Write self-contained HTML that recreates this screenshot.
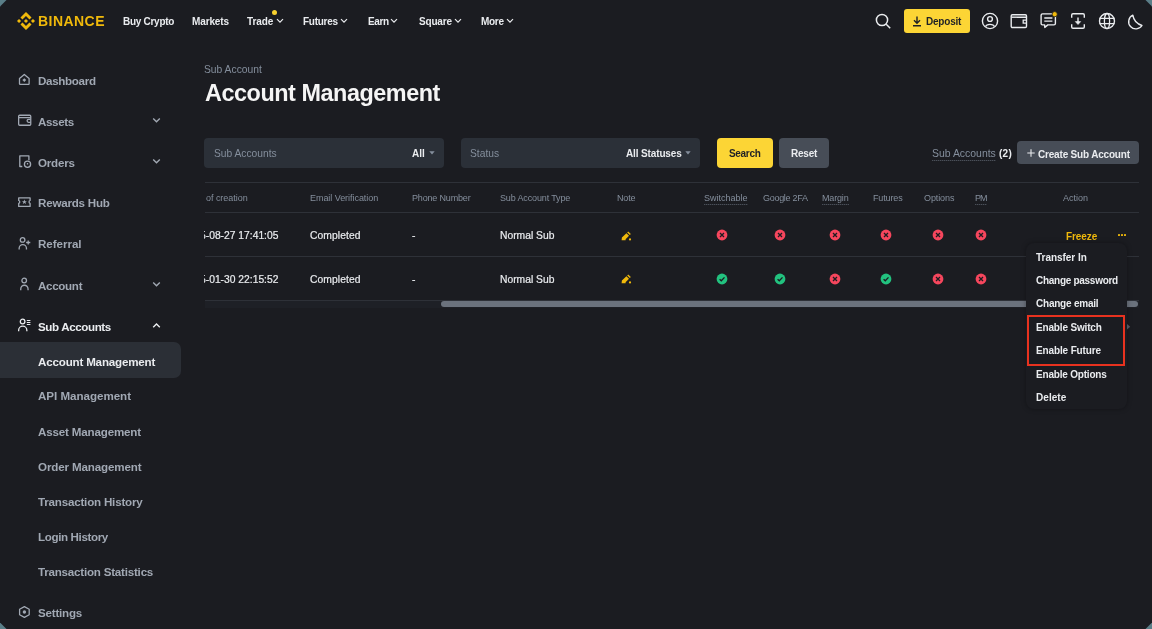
<!DOCTYPE html>
<html><head><meta charset="utf-8"><style>
html,body{margin:0;padding:0;}
body{width:1152px;height:629px;overflow:hidden;background:#5a7e88;position:relative;font-family:"Liberation Sans",sans-serif;}
#win{position:absolute;left:0;top:0;width:1152px;height:629px;background:#1b1c21;clip-path:polygon(6.5px 0,1145.5px 0,1152px 6.5px,1152px 622.5px,1145.5px 629px,6.5px 629px,0 622.5px,0 6.5px);}
.t{position:absolute;white-space:nowrap;line-height:1;will-change:transform;}
.r{position:absolute;}
</style></head><body><div id="win">
<svg class="r" style="left:17px;top:12px;" width="18" height="18" viewBox="0 0 126.61 126.61"><g fill="#f0b90b"><path d="M38.73,53.2,63.3,28.63,87.89,53.22l14.3-14.3L63.3,0,24.43,38.87Z"/><path d="M0,63.31l14.3-14.3,14.3,14.3L14.3,77.61Z"/><path d="M38.73,73.41,63.3,98l24.59-24.6,14.31,14.29L63.3,126.61,24.42,87.74Z"/><path d="M98,63.31l14.3-14.3,14.3,14.3-14.3,14.3Z"/><path d="M77.81,63.3,63.3,48.78,48.8,63.29,63.3,77.83Z"/></g></svg>
<div class="t" style="left:38.00px;top:14.00px;font-size:14.0px;font-weight:700;color:#f0b90b;letter-spacing:0.45px;">BINANCE</div>
<div class="t" style="left:122.50px;top:17.00px;font-size:10.0px;font-weight:700;color:#eaecef;letter-spacing:-0.278px;">Buy Crypto</div>
<div class="t" style="left:191.90px;top:17.00px;font-size:10.0px;font-weight:700;color:#eaecef;letter-spacing:-0.119px;">Markets</div>
<div class="t" style="left:246.90px;top:17.00px;font-size:10.0px;font-weight:700;color:#eaecef;letter-spacing:-0.072px;">Trade</div>
<div class="t" style="left:302.80px;top:17.00px;font-size:10.0px;font-weight:700;color:#eaecef;letter-spacing:-0.262px;">Futures</div>
<div class="t" style="left:367.80px;top:17.00px;font-size:10.0px;font-weight:700;color:#eaecef;letter-spacing:-0.378px;">Earn</div>
<div class="t" style="left:418.75px;top:17.00px;font-size:10.0px;font-weight:700;color:#eaecef;letter-spacing:-0.181px;">Square</div>
<div class="t" style="left:481.25px;top:17.00px;font-size:10.0px;font-weight:700;color:#eaecef;letter-spacing:-0.302px;">More</div>
<svg class="r" style="left:275.5px;top:18px;" width="8" height="6" viewBox="0 0 8 6"><path d="M1 1.2 L4 4.2 L7 1.2" fill="none" stroke="#eaecef" stroke-width="1.2"/></svg>
<svg class="r" style="left:340px;top:18px;" width="8" height="6" viewBox="0 0 8 6"><path d="M1 1.2 L4 4.2 L7 1.2" fill="none" stroke="#eaecef" stroke-width="1.2"/></svg>
<svg class="r" style="left:390px;top:18px;" width="8" height="6" viewBox="0 0 8 6"><path d="M1 1.2 L4 4.2 L7 1.2" fill="none" stroke="#eaecef" stroke-width="1.2"/></svg>
<svg class="r" style="left:454px;top:18px;" width="8" height="6" viewBox="0 0 8 6"><path d="M1 1.2 L4 4.2 L7 1.2" fill="none" stroke="#eaecef" stroke-width="1.2"/></svg>
<svg class="r" style="left:506px;top:18px;" width="8" height="6" viewBox="0 0 8 6"><path d="M1 1.2 L4 4.2 L7 1.2" fill="none" stroke="#eaecef" stroke-width="1.2"/></svg>
<div class="r" style="left:272.3px;top:10.3px;width:5px;height:5px;border-radius:50%;background:#f8d12f"></div>
<svg class="r" style="left:875px;top:13px;" width="17" height="17" viewBox="0 0 17 17"><circle cx="7" cy="7" r="5.6" fill="none" stroke="#eaecef" stroke-width="1.5"/><path d="M11.2 11.2 L15.2 15.2" stroke="#eaecef" stroke-width="1.5"/></svg>
<div class="r" style="left:904px;top:9px;width:65.5px;height:24px;background:#fcd535;border-radius:3px;"></div>
<svg class="r" style="left:912px;top:15.5px;" width="10" height="11" viewBox="0 0 10 11"><path d="M5 0.5 V7 M2 4.2 L5 7.2 L8 4.2 M1 9.8 H9" fill="none" stroke="#1e2026" stroke-width="1.4"/></svg>
<div class="t" style="left:926.40px;top:17.00px;font-size:10.0px;font-weight:700;color:#1e2026;letter-spacing:-0.212px;">Deposit</div>
<svg class="r" style="left:981px;top:12px;" width="18" height="18" viewBox="0 0 18 18"><circle cx="9" cy="9" r="7.6" fill="none" stroke="#eaecef" stroke-width="1.4"/><circle cx="9" cy="7" r="2.4" fill="none" stroke="#eaecef" stroke-width="1.4"/><path d="M4.6 14.6 C5.5 11.6 12.5 11.6 13.4 14.6" fill="none" stroke="#eaecef" stroke-width="1.4"/></svg>
<svg class="r" style="left:1010px;top:13px;" width="18" height="16" viewBox="0 0 18 16"><rect x="1.2" y="1.7" width="15.3" height="12.8" rx="1.2" fill="none" stroke="#eaecef" stroke-width="1.4"/><path d="M1.2 4.2 H16.5" stroke="#eaecef" stroke-width="1.4"/><path d="M16.5 7.2 H13.2 V10.2 H16.5" fill="none" stroke="#eaecef" stroke-width="1.3"/></svg>
<svg class="r" style="left:1039px;top:11px;" width="19" height="18" viewBox="0 0 19 18"><path d="M3.5 2.9 H15 Q16.4 2.9 16.4 4.3 V12.5 Q16.4 13.9 15 13.9 H8.8 L5.8 16.4 L5.6 13.9 H3.5 Q2.1 13.9 2.1 12.5 V4.3 Q2.1 2.9 3.5 2.9 Z" fill="none" stroke="#eaecef" stroke-width="1.4" stroke-linejoin="round"/><path d="M5.3 7 H13.4 M5.3 10.1 H13.4" stroke="#eaecef" stroke-width="1.4"/><circle cx="15.7" cy="3.2" r="2.6" fill="#f0b90b" stroke="#1b1c21" stroke-width="0.8"/></svg>
<svg class="r" style="left:1070px;top:12px;" width="16" height="18" viewBox="0 0 16 18"><path d="M1.7 5.8 V3.1 Q1.7 1.8 3 1.8 H13 Q14.3 1.8 14.3 3.1 V5.8 M1.7 12.3 V15 Q1.7 16.3 3 16.3 H13 Q14.3 16.3 14.3 15 V12.3" fill="none" stroke="#eaecef" stroke-width="1.4"/><path d="M8 5.4 V10.5" stroke="#eaecef" stroke-width="1.4"/><path d="M5.3 9.6 H10.7 L8 12.5 Z" fill="#eaecef" stroke="#eaecef" stroke-width="0.6" stroke-linejoin="round"/></svg>
<svg class="r" style="left:1098px;top:11.7px;" width="18" height="18" viewBox="0 0 18 18"><circle cx="9" cy="9" r="7.5" fill="none" stroke="#eaecef" stroke-width="1.4"/><ellipse cx="9" cy="9" rx="2.6" ry="7.5" fill="none" stroke="#eaecef" stroke-width="1.3"/><path d="M1.5 6.3 H16.5 M1.5 11.7 H16.5" stroke="#eaecef" stroke-width="1.3"/></svg>
<svg class="r" style="left:1127px;top:12.5px;" width="18" height="19" viewBox="0 0 18 19"><path d="M5.8 2.2 A7.2 7.2 0 1 0 15 12.5 A13 13 0 0 1 5.8 2.2 Z" fill="none" stroke="#eaecef" stroke-width="1.4" stroke-linejoin="round"/></svg>
<div class="t" style="left:37.80px;top:75.00px;font-size:11.6px;font-weight:700;color:#a1a8b3;letter-spacing:-0.320px;">Dashboard</div>
<div class="t" style="left:37.80px;top:116.00px;font-size:11.6px;font-weight:700;color:#a1a8b3;letter-spacing:-0.366px;">Assets</div>
<svg class="r" style="left:152px;top:117.1px;" width="9" height="7" viewBox="0 0 9 7"><path d="M1.2 1.5 L4.5 4.8 L7.8 1.5" fill="none" stroke="#a1a8b3" stroke-width="1.4"/></svg>
<div class="t" style="left:37.80px;top:157.00px;font-size:11.6px;font-weight:700;color:#a1a8b3;letter-spacing:-0.226px;">Orders</div>
<svg class="r" style="left:152px;top:157.8px;" width="9" height="7" viewBox="0 0 9 7"><path d="M1.2 1.5 L4.5 4.8 L7.8 1.5" fill="none" stroke="#a1a8b3" stroke-width="1.4"/></svg>
<div class="t" style="left:37.80px;top:197.00px;font-size:11.6px;font-weight:700;color:#a1a8b3;letter-spacing:-0.219px;">Rewards Hub</div>
<div class="t" style="left:37.80px;top:238.00px;font-size:11.6px;font-weight:700;color:#a1a8b3;letter-spacing:-0.033px;">Referral</div>
<div class="t" style="left:37.80px;top:280.00px;font-size:11.6px;font-weight:700;color:#a1a8b3;letter-spacing:-0.312px;">Account</div>
<svg class="r" style="left:152px;top:280.7px;" width="9" height="7" viewBox="0 0 9 7"><path d="M1.2 1.5 L4.5 4.8 L7.8 1.5" fill="none" stroke="#a1a8b3" stroke-width="1.4"/></svg>
<div class="t" style="left:37.80px;top:321.00px;font-size:11.6px;font-weight:700;color:#eaecef;letter-spacing:-0.383px;">Sub Accounts</div>
<svg class="r" style="left:152px;top:321.5px;" width="9" height="7" viewBox="0 0 9 7"><path d="M1.2 5.2 L4.5 1.9 L7.8 5.2" fill="none" stroke="#eaecef" stroke-width="1.4"/></svg>
<svg class="r" style="left:17px;top:72px;" width="14" height="14" viewBox="0 0 14 14"><path d="M2.5 6.6 L7.3 2.5 L12.1 6.6 V11.8 Q12.1 12.4 11.5 12.4 H3.1 Q2.5 12.4 2.5 11.8 Z" fill="none" stroke="#a1a8b3" stroke-width="1.3" stroke-linejoin="round"/><path d="M7.3 6.2 L9.2 8.1 L7.3 10 L5.4 8.1 Z" fill="#a1a8b3"/></svg>
<svg class="r" style="left:17px;top:113px;" width="15" height="14" viewBox="0 0 15 14"><rect x="1.65" y="2.25" width="12.1" height="10" rx="1" fill="none" stroke="#a1a8b3" stroke-width="1.3"/><path d="M1.65 4.6 H13.75" fill="none" stroke="#a1a8b3" stroke-width="1.3"/><path d="M13.75 6.3 H11.6 A1.5 1.5 0 0 0 11.6 9.3 H13.75" fill="none" stroke="#a1a8b3" stroke-width="1.3"/></svg>
<svg class="r" style="left:17px;top:154px;" width="15" height="15" viewBox="0 0 15 15"><path d="M5.3 12.5 H2.8 V1.8 H11.9 V6.2" fill="none" stroke="#a1a8b3" stroke-width="1.3" stroke-linejoin="round"/><circle cx="10.5" cy="10.2" r="3.1" fill="none" stroke="#a1a8b3" stroke-width="1.3"/><path d="M10.5 8.9 V10.5" fill="none" stroke="#a1a8b3" stroke-width="1.3"/></svg>
<svg class="r" style="left:17px;top:196px;" width="15" height="13" viewBox="0 0 15 13"><path d="M1.7 1.9 H13.1 V4.4 C11.7 4.9 11.7 6.9 13.1 7.4 V10.4 H1.7 V7.4 C3.1 6.9 3.1 4.9 1.7 4.4 Z" fill="none" stroke="#a1a8b3" stroke-width="1.3" stroke-linejoin="round"/><path d="M7.4 3.4 L8.1 5.2 H9.9 L8.5 6.3 L9 8.1 L7.4 7 L5.8 8.1 L6.3 6.3 L4.9 5.2 H6.7 Z" fill="#a1a8b3"/></svg>
<svg class="r" style="left:17px;top:236px;" width="15" height="15" viewBox="0 0 15 15"><circle cx="5.6" cy="3.9" r="2.3" fill="none" stroke="#a1a8b3" stroke-width="1.3"/><path d="M2.15 13.6 V12.3 A3.65 3.65 0 0 1 9.45 12.3 V13.6" fill="none" stroke="#a1a8b3" stroke-width="1.3"/><path d="M11.2 4.4 V8.6 M9.1 6.5 H13.3" fill="none" stroke="#a1a8b3" stroke-width="1.3"/></svg>
<svg class="r" style="left:17px;top:277px;" width="15" height="15" viewBox="0 0 15 15"><circle cx="7.2" cy="3.5" r="2.3" fill="none" stroke="#a1a8b3" stroke-width="1.3"/><path d="M3.75 13.2 V11.9 A3.65 3.65 0 0 1 11.05 11.9 V13.2" fill="none" stroke="#a1a8b3" stroke-width="1.3"/></svg>
<svg class="r" style="left:17px;top:318px;" width="15" height="15" viewBox="0 0 15 15"><circle cx="5.6" cy="3.5" r="2.3" stroke="#eaecef" fill="none" stroke-width="1.3"/><path d="M1.65 13.3 V12.3 A4.1 4.1 0 0 1 9.85 12.3 V13.3" stroke="#eaecef" fill="none" stroke-width="1.3"/><path d="M9.8 2.5 H13.4 M9.8 4.5 H13.4 M9.8 6.5 H13.4" stroke="#eaecef" stroke-width="1.1"/></svg>
<svg class="r" style="left:17px;top:605px;" width="15" height="15" viewBox="0 0 15 15"><path d="M7.4 1.6 L12.2 4.3 V9.7 L7.4 12.4 L2.6 9.7 V4.3 Z" fill="none" stroke="#a1a8b3" stroke-width="1.3" stroke-linejoin="round"/><circle cx="7.4" cy="7" r="1.7" fill="#a1a8b3"/></svg>
<div class="r" style="left:0px;top:342px;width:181px;height:36px;background:#2b2f36;border-radius:0 7px 7px 0;"></div>
<div class="t" style="left:37.60px;top:356.00px;font-size:11.6px;font-weight:700;color:#eaecef;letter-spacing:-0.181px;">Account Management</div>
<div class="t" style="left:37.80px;top:390.00px;font-size:11.6px;font-weight:700;color:#a1a8b3;letter-spacing:-0.032px;">API Management</div>
<div class="t" style="left:37.80px;top:426.00px;font-size:11.6px;font-weight:700;color:#a1a8b3;letter-spacing:-0.171px;">Asset Management</div>
<div class="t" style="left:37.80px;top:461.00px;font-size:11.6px;font-weight:700;color:#a1a8b3;letter-spacing:-0.138px;">Order Management</div>
<div class="t" style="left:37.80px;top:496.00px;font-size:11.6px;font-weight:700;color:#a1a8b3;letter-spacing:-0.197px;">Transaction History</div>
<div class="t" style="left:37.80px;top:531.00px;font-size:11.6px;font-weight:700;color:#a1a8b3;letter-spacing:-0.368px;">Login History</div>
<div class="t" style="left:37.80px;top:566.00px;font-size:11.6px;font-weight:700;color:#a1a8b3;letter-spacing:-0.216px;">Transaction Statistics</div>
<div class="t" style="left:38.00px;top:607.00px;font-size:11.6px;font-weight:700;color:#a1a8b3;letter-spacing:-0.221px;">Settings</div>
<div class="t" style="left:204.20px;top:65.00px;font-size:10.3px;font-weight:400;color:#848e9c;">Sub Account</div>
<div class="t" style="left:204.50px;top:82.00px;font-size:23.4px;font-weight:700;color:#f5f5f5;letter-spacing:-0.45px;">Account Management</div>
<div class="r" style="left:204px;top:138px;width:239.5px;height:29.5px;background:#2b3038;border-radius:4px;"></div>
<div class="t" style="left:213.50px;top:149.00px;font-size:10.25px;font-weight:400;color:#848e9c;">Sub Accounts</div>
<div class="t" style="left:412.40px;top:149.00px;font-size:10.0px;font-weight:700;color:#eaecef;letter-spacing:0.009px;">All</div>
<svg class="r" style="left:428.5px;top:150.5px;" width="6" height="4" viewBox="0 0 6 4"><path d="M0.3 0.3 H5.7 L3 3.5 Z" fill="#848e9c"/></svg>
<div class="r" style="left:460.5px;top:138px;width:239px;height:29.5px;background:#2b3038;border-radius:4px;"></div>
<div class="t" style="left:469.80px;top:149.00px;font-size:10.25px;font-weight:400;color:#848e9c;">Status</div>
<div class="t" style="left:626.10px;top:149.00px;font-size:10.0px;font-weight:700;color:#eaecef;letter-spacing:-0.132px;">All Statuses</div>
<svg class="r" style="left:684.5px;top:150.5px;" width="6" height="4" viewBox="0 0 6 4"><path d="M0.3 0.3 H5.7 L3 3.5 Z" fill="#848e9c"/></svg>
<div class="r" style="left:717px;top:138px;width:55.6px;height:29.5px;background:#fcd535;border-radius:4px;"></div>
<div class="t" style="left:729.00px;top:149.00px;font-size:10.0px;font-weight:700;color:#1e2026;letter-spacing:-0.312px;">Search</div>
<div class="r" style="left:778.5px;top:138px;width:50.5px;height:29.5px;background:#474d57;border-radius:4px;"></div>
<div class="t" style="left:790.70px;top:149.00px;font-size:10.0px;font-weight:700;color:#eaecef;letter-spacing:-0.237px;">Reset</div>
<div class="t" style="left:931.80px;top:149.00px;font-size:10.45px;font-weight:400;color:#848e9c;">Sub Accounts</div>
<div class="r" style="left:931.8px;top:159.6px;width:64px;height:1px;background:repeating-linear-gradient(90deg,#4a4f58 0 1.5px,#2c2f36 1.5px 2px);border-radius:0;"></div>
<div class="t" style="left:998.60px;top:149.00px;font-size:10.0px;font-weight:700;color:#eaecef;letter-spacing:0.283px;">(2)</div>
<div class="r" style="left:1017px;top:141px;width:121.6px;height:23.3px;background:#474d57;border-radius:4px;"></div>
<svg class="r" style="left:1026.5px;top:149px;" width="8" height="8" viewBox="0 0 8 8"><path d="M4 0.3 V7.7 M0.3 4 H7.7" stroke="#eaecef" stroke-width="1.1"/></svg>
<div class="t" style="left:1037.70px;top:150.00px;font-size:10.0px;font-weight:700;color:#eaecef;letter-spacing:-0.188px;">Create Sub Account</div>
<div class="r" style="left:204.5px;top:181.8px;width:934px;height:1px;background:#2e3138;border-radius:0;"></div>
<div class="r" style="left:204.5px;top:211.8px;width:934px;height:1px;background:#2e3138;border-radius:0;"></div>
<div class="r" style="left:204.5px;top:255.9px;width:934px;height:1px;background:#2e3138;border-radius:0;"></div>
<div class="r" style="left:204.5px;top:299.8px;width:934px;height:1px;background:#2e3138;border-radius:0;"></div>
<div class="t" style="left:205.80px;top:194.00px;font-size:9.0px;font-weight:400;color:#848e9c;letter-spacing:-0.033px;">of creation</div>
<div class="t" style="left:309.50px;top:194.00px;font-size:9.0px;font-weight:400;color:#848e9c;letter-spacing:-0.049px;">Email Verification</div>
<div class="t" style="left:411.90px;top:194.00px;font-size:9.0px;font-weight:400;color:#848e9c;letter-spacing:-0.168px;">Phone Number</div>
<div class="t" style="left:499.60px;top:194.00px;font-size:9.0px;font-weight:400;color:#848e9c;letter-spacing:-0.139px;">Sub Account Type</div>
<div class="t" style="left:616.75px;top:194.00px;font-size:9.0px;font-weight:400;color:#848e9c;letter-spacing:-0.139px;">Note</div>
<div class="t" style="left:704.25px;top:194.00px;font-size:9.0px;font-weight:400;color:#848e9c;letter-spacing:-0.015px;">Switchable</div>
<div class="r" style="left:704.25px;top:203.5px;width:43.5px;height:1px;background:repeating-linear-gradient(90deg,#4a4f58 0 1.5px,#2c2f36 1.5px 2px);border-radius:0;"></div>
<div class="t" style="left:762.60px;top:194.00px;font-size:9.0px;font-weight:400;color:#848e9c;letter-spacing:-0.292px;">Google 2FA</div>
<div class="t" style="left:822.00px;top:194.00px;font-size:9.0px;font-weight:400;color:#848e9c;letter-spacing:-0.163px;">Margin</div>
<div class="r" style="left:822px;top:203.5px;width:26.7px;height:1px;background:repeating-linear-gradient(90deg,#4a4f58 0 1.5px,#2c2f36 1.5px 2px);border-radius:0;"></div>
<div class="t" style="left:872.60px;top:194.00px;font-size:9.0px;font-weight:400;color:#848e9c;letter-spacing:-0.136px;">Futures</div>
<div class="t" style="left:923.60px;top:194.00px;font-size:9.0px;font-weight:400;color:#848e9c;letter-spacing:-0.105px;">Options</div>
<div class="t" style="left:974.60px;top:194.00px;font-size:9.0px;font-weight:400;color:#848e9c;letter-spacing:-0.900px;">PM</div>
<div class="r" style="left:974.6px;top:203.5px;width:12.6px;height:1px;background:repeating-linear-gradient(90deg,#4a4f58 0 1.5px,#2c2f36 1.5px 2px);border-radius:0;"></div>
<div class="t" style="left:1062.70px;top:194.00px;font-size:9.0px;font-weight:400;color:#848e9c;letter-spacing:-0.003px;">Action</div>
<div class="t" style="left:199.60px;top:231.00px;font-size:10.3px;font-weight:400;color:#eaecef;-webkit-text-stroke:0.2px #eaecef;clip-path:inset(-5px -5px -5px 4.4px);">5-08-27 17:41:05</div>
<div class="t" style="left:309.50px;top:231.00px;font-size:10.3px;font-weight:400;color:#eaecef;-webkit-text-stroke:0.2px #eaecef;letter-spacing:0.100px;">Completed</div>
<div class="t" style="left:411.90px;top:231.00px;font-size:10.3px;font-weight:400;color:#eaecef;-webkit-text-stroke:0.2px #eaecef;">-</div>
<div class="t" style="left:499.60px;top:231.00px;font-size:10.3px;font-weight:400;color:#eaecef;-webkit-text-stroke:0.2px #eaecef;letter-spacing:0.003px;">Normal Sub</div>
<div class="t" style="left:199.60px;top:275.00px;font-size:10.3px;font-weight:400;color:#eaecef;-webkit-text-stroke:0.2px #eaecef;clip-path:inset(-5px -5px -5px 4.4px);">5-01-30 22:15:52</div>
<div class="t" style="left:309.50px;top:275.00px;font-size:10.3px;font-weight:400;color:#eaecef;-webkit-text-stroke:0.2px #eaecef;letter-spacing:0.100px;">Completed</div>
<div class="t" style="left:411.90px;top:275.00px;font-size:10.3px;font-weight:400;color:#eaecef;-webkit-text-stroke:0.2px #eaecef;">-</div>
<div class="t" style="left:499.60px;top:275.00px;font-size:10.3px;font-weight:400;color:#eaecef;-webkit-text-stroke:0.2px #eaecef;letter-spacing:0.003px;">Normal Sub</div>
<svg class="r" style="left:620.5px;top:230.5px;" width="11" height="10" viewBox="0 0 11 10"><path d="M0.6 9.2 L0.9 6.6 L5.4 2.2 L8.0 4.8 L4.6 8.2 L4.6 9.2 Z" fill="#f0b90b"/><path d="M6.2 1.4 L7.2 0.5 L9.8 3.1 L8.8 4.0 Z" fill="#f0b90b"/><circle cx="9" cy="8.4" r="1.1" fill="#f0b90b"/></svg>
<svg class="r" style="left:620.5px;top:274.3px;" width="11" height="10" viewBox="0 0 11 10"><path d="M0.6 9.2 L0.9 6.6 L5.4 2.2 L8.0 4.8 L4.6 8.2 L4.6 9.2 Z" fill="#f0b90b"/><path d="M6.2 1.4 L7.2 0.5 L9.8 3.1 L8.8 4.0 Z" fill="#f0b90b"/><circle cx="9" cy="8.4" r="1.1" fill="#f0b90b"/></svg>
<svg class="r" style="left:715.8px;top:229px;" width="12" height="12" viewBox="0 0 12 12"><circle cx="6" cy="6" r="5.4" fill="#f6465d"/><path d="M4 4 L8 8 M8 4 L4 8" stroke="#1b1c21" stroke-width="1.3"/></svg>
<svg class="r" style="left:774.4px;top:229px;" width="12" height="12" viewBox="0 0 12 12"><circle cx="6" cy="6" r="5.4" fill="#f6465d"/><path d="M4 4 L8 8 M8 4 L4 8" stroke="#1b1c21" stroke-width="1.3"/></svg>
<svg class="r" style="left:829.3px;top:229px;" width="12" height="12" viewBox="0 0 12 12"><circle cx="6" cy="6" r="5.4" fill="#f6465d"/><path d="M4 4 L8 8 M8 4 L4 8" stroke="#1b1c21" stroke-width="1.3"/></svg>
<svg class="r" style="left:880.3px;top:229px;" width="12" height="12" viewBox="0 0 12 12"><circle cx="6" cy="6" r="5.4" fill="#f6465d"/><path d="M4 4 L8 8 M8 4 L4 8" stroke="#1b1c21" stroke-width="1.3"/></svg>
<svg class="r" style="left:931.5px;top:229px;" width="12" height="12" viewBox="0 0 12 12"><circle cx="6" cy="6" r="5.4" fill="#f6465d"/><path d="M4 4 L8 8 M8 4 L4 8" stroke="#1b1c21" stroke-width="1.3"/></svg>
<svg class="r" style="left:975.3px;top:229px;" width="12" height="12" viewBox="0 0 12 12"><circle cx="6" cy="6" r="5.4" fill="#f6465d"/><path d="M4 4 L8 8 M8 4 L4 8" stroke="#1b1c21" stroke-width="1.3"/></svg>
<svg class="r" style="left:715.8px;top:272.8px;" width="12" height="12" viewBox="0 0 12 12"><circle cx="6" cy="6" r="5.4" fill="#22c27f"/><path d="M3.6 6.2 L5.3 7.8 L8.5 4.4" fill="none" stroke="#1b1c21" stroke-width="1.3"/></svg>
<svg class="r" style="left:774.4px;top:272.8px;" width="12" height="12" viewBox="0 0 12 12"><circle cx="6" cy="6" r="5.4" fill="#22c27f"/><path d="M3.6 6.2 L5.3 7.8 L8.5 4.4" fill="none" stroke="#1b1c21" stroke-width="1.3"/></svg>
<svg class="r" style="left:829.3px;top:272.8px;" width="12" height="12" viewBox="0 0 12 12"><circle cx="6" cy="6" r="5.4" fill="#f6465d"/><path d="M4 4 L8 8 M8 4 L4 8" stroke="#1b1c21" stroke-width="1.3"/></svg>
<svg class="r" style="left:880.3px;top:272.8px;" width="12" height="12" viewBox="0 0 12 12"><circle cx="6" cy="6" r="5.4" fill="#22c27f"/><path d="M3.6 6.2 L5.3 7.8 L8.5 4.4" fill="none" stroke="#1b1c21" stroke-width="1.3"/></svg>
<svg class="r" style="left:931.5px;top:272.8px;" width="12" height="12" viewBox="0 0 12 12"><circle cx="6" cy="6" r="5.4" fill="#f6465d"/><path d="M4 4 L8 8 M8 4 L4 8" stroke="#1b1c21" stroke-width="1.3"/></svg>
<svg class="r" style="left:975.3px;top:272.8px;" width="12" height="12" viewBox="0 0 12 12"><circle cx="6" cy="6" r="5.4" fill="#f6465d"/><path d="M4 4 L8 8 M8 4 L4 8" stroke="#1b1c21" stroke-width="1.3"/></svg>
<div class="t" style="left:1066.20px;top:232.00px;font-size:10.0px;font-weight:700;color:#f0b90b;letter-spacing:-0.098px;">Freeze</div>
<div class="r" style="left:1118.0px;top:234.4px;width:1.7px;height:1.7px;background:#f0b90b;border-radius:50%;"></div>
<div class="r" style="left:1121.2px;top:234.4px;width:1.7px;height:1.7px;background:#f0b90b;border-radius:50%;"></div>
<div class="r" style="left:1124.4px;top:234.4px;width:1.7px;height:1.7px;background:#f0b90b;border-radius:50%;"></div>
<div class="t" style="left:1066.20px;top:275.00px;font-size:10.0px;font-weight:700;color:#f0b90b;letter-spacing:-0.098px;">Freeze</div>
<div class="r" style="left:204.5px;top:300.8px;width:934px;height:7px;background:#1e2026;border-radius:0;"></div>
<div class="r" style="left:441.3px;top:301.2px;width:697px;height:5.8px;background:#6b727d;border-radius:3px;"></div>
<div class="r" style="left:1026px;top:243px;width:100.6px;height:166px;background:#1b1c21;border-radius:8px;box-shadow:0 0 5px rgba(0,0,0,0.35)"></div>
<svg class="r" style="left:1127px;top:324px;" width="4" height="6" viewBox="0 0 4 6"><path d="M0 0 L3.2 2.8 L0 5.6 Z" fill="#4f545c"/></svg>
<div class="t" style="left:1036.30px;top:253.00px;font-size:10.0px;font-weight:700;color:#eaecef;letter-spacing:-0.034px;">Transfer In</div>
<div class="t" style="left:1036.30px;top:276.00px;font-size:10.0px;font-weight:700;color:#eaecef;letter-spacing:-0.281px;">Change password</div>
<div class="t" style="left:1036.30px;top:299.00px;font-size:10.0px;font-weight:700;color:#eaecef;letter-spacing:-0.221px;">Change email</div>
<div class="t" style="left:1036.30px;top:323.00px;font-size:10.0px;font-weight:700;color:#eaecef;letter-spacing:-0.166px;">Enable Switch</div>
<div class="t" style="left:1036.30px;top:346.00px;font-size:10.0px;font-weight:700;color:#eaecef;letter-spacing:-0.132px;">Enable Future</div>
<div class="t" style="left:1036.30px;top:370.00px;font-size:10.0px;font-weight:700;color:#eaecef;letter-spacing:-0.196px;">Enable Options</div>
<div class="t" style="left:1036.30px;top:393.00px;font-size:10.0px;font-weight:700;color:#eaecef;letter-spacing:0.057px;">Delete</div>
<div class="r" style="left:1026.5px;top:314.5px;width:98.2px;height:51px;box-sizing:border-box;border:2.2px solid #e8321f"></div>
</div></body></html>
